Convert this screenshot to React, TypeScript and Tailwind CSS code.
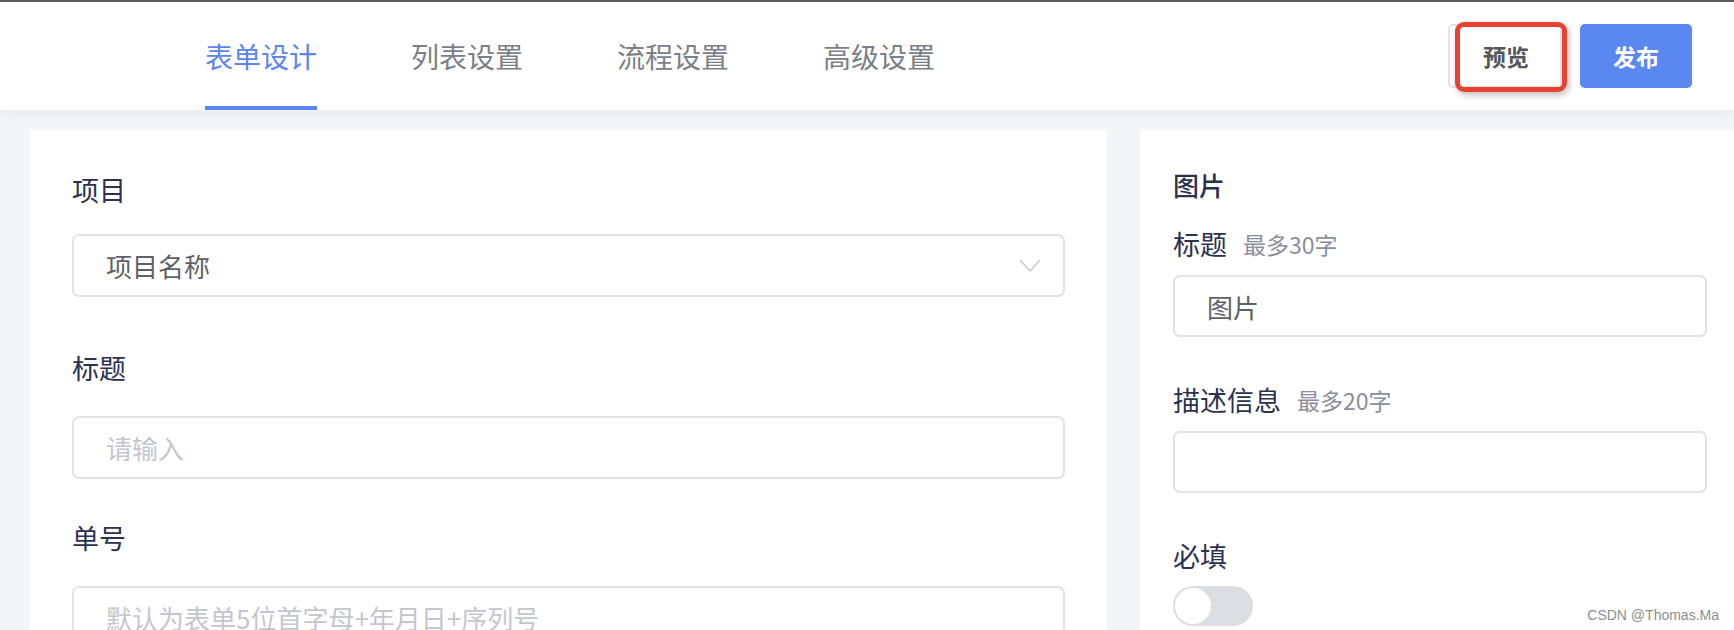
const tabs = ["表单设计", "列表设置", "流程设置", "高级设置"];

function Label({ text, hint }: { text: string; hint?: string }) {
  return (
    <div className="flex items-center h-[26px] leading-[26px]">
      <span className="text-[27px] text-[#2b3150]">{text}</span>
      {hint && <span className="ml-[16px] text-[23px] text-[#8a8f9c]">{hint}</span>}
    </div>
  );
}

function Field({ value, placeholder, h = "h-[63px]" }: { value?: string; placeholder?: string; h?: string }) {
  return (
    <div className={`${h} flex items-center pl-[32px] border-2 border-[#e1e2e8] rounded-[7px] text-[26px]`}>
      {value ? (
        <span className="text-[#5f6168]">{value}</span>
      ) : (
        <span className="text-[#c3c6cf]">{placeholder}</span>
      )}
    </div>
  );
}

export default function App() {
  return (
    <div
      className="relative w-full h-[630px] overflow-hidden bg-[#f4f5f9] border-t-2 border-[#5a5a5c]"
      style={{ fontFamily: '"Noto Sans CJK SC", "Noto Sans", sans-serif' }}
    >
      <div className="relative z-10 h-[108px] bg-white flex items-stretch shadow-[0_3px_12px_rgba(30,40,80,0.06)]">
        <div className="flex pl-[205px] gap-[94px]">
          {tabs.map((t, i) => (
            <div
              key={t}
              className={
                i === 0
                  ? "relative flex items-center text-[28px] text-[#5b85ef]"
                  : "relative flex items-center text-[28px] text-[#7b7f87]"
              }
            >
              {t}
              {i === 0 && <div className="absolute left-0 right-0 bottom-0 h-[4px] bg-[#5b85ef]" />}
            </div>
          ))}
        </div>

        <div className="ml-auto mr-[42px] flex items-center gap-[18px]">
          <div className="relative">
            <button className="w-[114px] h-[64px] border-2 border-[#e2e3e8] rounded-[5px] bg-white text-[23px] font-bold text-[#555659] pl-[2px]">
              预览
            </button>
            <div className="absolute left-[7px] top-[-2px] w-[112px] h-[70px] border-[5px] border-[#e8412f] rounded-[9px] shadow-[2px_3px_6px_rgba(0,0,0,0.25)] pointer-events-none" />
          </div>
          <button className="w-[112px] h-[64px] rounded-[5px] bg-[#5b87f1] text-white text-[23px] font-bold">
            发布
          </button>
        </div>
      </div>

      <div className="flex gap-[33px] pl-[30px] pt-[20px]">
        <div className="w-[1077px] h-[520px] bg-white px-[42px] pt-[47px]">
          <Label text="项目" />
          <div className="mt-[31px] h-[63px] flex items-center justify-between pl-[32px] pr-[22px] border-2 border-[#e1e2e8] rounded-[7px] text-[26px]">
            <span className="text-[#5f6168]">项目名称</span>
            <svg width="22" height="13" viewBox="0 0 22 13" fill="none" stroke="#c3c6cf" strokeWidth="1.3">
              <polyline points="1,1 11,12 21,1" />
            </svg>
          </div>
          <div className="mt-[58px]">
            <Label text="标题" />
          </div>
          <div className="mt-[35px]">
            <Field placeholder="请输入" />
          </div>
          <div className="mt-[46px]">
            <Label text="单号" />
          </div>
          <div className="mt-[35px]">
            <Field placeholder="默认为表单5位首字母+年月日+序列号" />
          </div>
        </div>

        <div className="flex-1 h-[520px] bg-white pl-[33px] pr-[27px] pt-[42px]">
          <div className="h-[26px] leading-[26px] text-[26px] font-medium text-[#2b3150]">图片</div>
          <div className="mt-[33px]">
            <Label text="标题" hint="最多30字" />
          </div>
          <div className="mt-[18px]">
            <Field value="图片" h="h-[62px]" />
          </div>
          <div className="mt-[50px]">
            <Label text="描述信息" hint="最多20字" />
          </div>
          <div className="mt-[18px]">
            <Field h="h-[62px]" />
          </div>
          <div className="mt-[50px]">
            <Label text="必填" />
          </div>
          <div className="mt-[17px] w-[80px] h-[40px] rounded-full bg-[#dcdde3] flex items-center pl-[2px]">
            <div className="w-[36px] h-[36px] rounded-full bg-white" />
          </div>
        </div>
      </div>

      <div
        className="absolute right-[15px] bottom-[4px] text-[14px] text-[#8e8e8e]"
        style={{ fontFamily: '"Liberation Sans", Arial, sans-serif' }}
      >
        CSDN @Thomas.Ma
      </div>
    </div>
  );
}
